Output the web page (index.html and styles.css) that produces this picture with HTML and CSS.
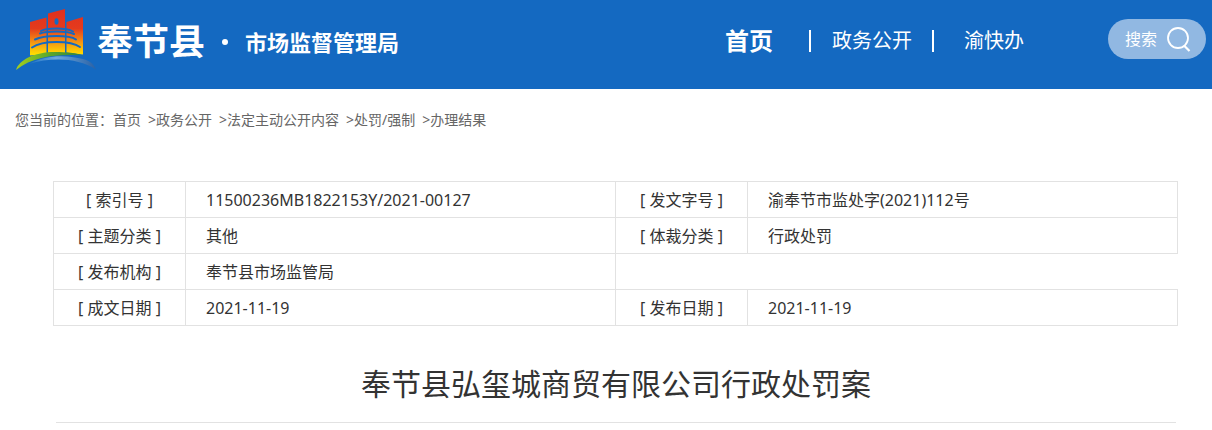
FILE: index.html
```html
<!DOCTYPE html>
<html lang="zh-CN">
<head>
<meta charset="utf-8">
<title>奉节县弘玺城商贸有限公司行政处罚案</title>
<link rel="stylesheet" href="styles.css">
</head>
<body>
<header class="header">
  <a class="brand" href="#">
    <svg class="brand-logo" viewBox="15 8 82 64" width="82" height="64" aria-hidden="true">
      <defs>
        <linearGradient id="tower" gradientUnits="userSpaceOnUse" x1="0" y1="10" x2="0" y2="54">
          <stop offset="0" stop-color="#e0301e"/>
          <stop offset=".42" stop-color="#e43b1d"/>
          <stop offset=".75" stop-color="#f59a12"/>
          <stop offset="1" stop-color="#ffdc00"/>
        </linearGradient>
        <linearGradient id="hill" x1="0" y1="0" x2="1" y2="0">
          <stop offset="0" stop-color="#a5cf1c"/>
          <stop offset=".5" stop-color="#5aa82c"/>
          <stop offset="1" stop-color="#2f8040"/>
        </linearGradient>
        <linearGradient id="river" x1="0" y1="0" x2="1" y2="0">
          <stop offset="0" stop-color="#1a70c4"/>
          <stop offset=".4" stop-color="#6ca8de"/>
          <stop offset="1" stop-color="#2a61a5"/>
        </linearGradient>
      </defs>
      <g fill="url(#tower)">
        <path d="M30 22 46.500 17.500V54L30 55.500Z"/>
        <path d="M48 13.500 65 9V53L48 53.500Z"/>
        <path d="M66.500 22 83 17V54.500L66.500 52.500Z"/>
      </g>
      <ellipse cx="56.500" cy="21.500" rx="2" ry="3.200" fill="#1469c1"/>
      <g fill="none" stroke="#1469c1" stroke-width="2" stroke-linecap="round">
        <path d="M41 31Q45 28.500 56.500 28.500T73 31.500"/>
        <path d="M40 33.500Q45 31.500 56.500 31.500T74 34"/>
        <path d="M35 39.500Q42 36 56.500 36T76 39.500"/>
        <path d="M32 47.500Q40 42 56.500 42T80 47"/>
      </g>
      <path d="M16 70C19 60 34 52 55 52C67 52 76 53 83 55.500C66 54 35 54 16 70Z" fill="url(#hill)"/>
      <path d="M29 64C44 56 60 55 75 57.500C87 59 93 62 96 69.500C78 58 52 57 29 64Z" fill="url(#river)"/>
    </svg>
    <span class="brand-county">奉节县</span>
    <span class="brand-dot"></span>
    <span class="brand-bureau">市场监督管理局</span>
  </a>
  <nav class="nav">
    <a class="nav-link nav-home" href="#">首页</a>
    <a class="nav-link nav-open" href="#">政务公开</a>
    <a class="nav-link nav-service" href="#">渝快办</a>
  </nav>
  <form class="search">
    <input class="search-input" type="text" placeholder="搜索" aria-label="搜索">
    <button class="search-button" type="button" aria-label="提交搜索">
      <svg viewBox="0 0 24 26" width="24" height="26" fill="none" stroke="#fff" aria-hidden="true">
        <circle cx="11" cy="12" r="10" stroke-width="1.800"/>
        <path d="M17 19.500 22.500 25" stroke-width="2.200"/>
      </svg>
    </button>
  </form>
</header>
<nav class="crumbs" aria-label="位置">
  <span>您当前的位置：</span>
  <a href="#">首页</a>
  <span class="crumb-sep">&gt;</span>
  <a href="#">政务公开</a>
  <span class="crumb-sep">&gt;</span>
  <a href="#">法定主动公开内容</a>
  <span class="crumb-sep">&gt;</span>
  <a href="#">处罚/强制</a>
  <span class="crumb-sep">&gt;</span>
  <a href="#">办理结果</a>
</nav>
<main class="content">
  <table class="info">
    <colgroup><col class="col-label"><col><col class="col-label"><col></colgroup>
    <tr><th scope="row">[ 索引号 ]</th><td>11500236MB1822153Y/2021-00127</td><th scope="row">[ 发文字号 ]</th><td>渝奉节市监处字(2021)112号</td></tr>
    <tr><th scope="row">[ 主题分类 ]</th><td>其他</td><th scope="row">[ 体裁分类 ]</th><td>行政处罚</td></tr>
    <tr><th scope="row">[ 发布机构 ]</th><td>奉节县市场监管局</td></tr>
    <tr><th scope="row">[ 成文日期 ]</th><td>2021-11-19</td><th scope="row">[ 发布日期 ]</th><td>2021-11-19</td></tr>
  </table>
  <h1 class="title">奉节县弘玺城商贸有限公司行政处罚案</h1>
</main>
</body>
</html>
```
FILE: styles.css
```css
* {
  box-sizing: border-box;
}

body {
  margin: 0;
  background: #fff;
  color: #333;
  font-family: "Noto Sans", "Noto Sans CJK SC", sans-serif;
  font-size: 16px;
}

a {
  color: inherit;
  text-decoration: none;
}

.header {
  display: flex;
  align-items: center;
  padding: 5px 6px 10px 15px;
  min-height: 89px;
  background: #1469c1;
  color: #fff;
}

.brand {
  display: flex;
  align-items: center;
  font-weight: 700;
  white-space: nowrap;
}

.brand-logo {
  flex: none;
  margin-bottom: 4px;
}

.brand-county {
  font-size: 36px;
  line-height: 60px;
}

.brand-dot {
  width: 6px;
  height: 6px;
  margin: 0 17px;
  border-radius: 50%;
  background: #fff;
}

.brand-bureau {
  font-size: 22px;
  line-height: 60px;
}

.nav {
  display: flex;
  align-items: center;
  margin: 0 0 2px auto;
  white-space: nowrap;
}

.nav-link {
  display: flex;
  align-items: center;
  font-size: 20px;
  line-height: 40px;
}

.nav-home {
  font-size: 24px;
  font-weight: 700;
}

.nav-home::after,
.nav-open::after {
  content: "";
  width: 2px;
  height: 22px;
  background: #fff;
}

.nav-home::after {
  margin: 0 21px 0 36px;
}

.nav-open::after {
  margin: 0 30px 0 20px;
}

.search {
  display: flex;
  align-items: center;
  width: 98px;
  height: 40px;
  margin: 0 0 6px 84px;
  padding: 0 15px 0 17px;
  border-radius: 20px;
  background: #91b8e2;
}

.search-input {
  flex: 1;
  min-width: 0;
  padding: 0;
  border: 0;
  outline: 0;
  background: transparent;
  color: #fff;
  font: inherit;
}

.search-input::placeholder {
  color: #fff;
  opacity: 1;
}

.search-button {
  display: flex;
  padding: 0;
  border: 0;
  background: transparent;
  cursor: pointer;
}

.crumbs {
  display: flex;
  padding: 20px 15px 0;
  color: #666;
  font-size: 14px;
  line-height: 22px;
  white-space: nowrap;
}

.crumb-sep {
  padding-left: 7px;
}

.content {
  padding: 50px 34px 0 53px;
}

.info {
  width: 100%;
  border-collapse: collapse;
  table-layout: fixed;
  line-height: 24px;
}

.col-label {
  width: 132px;
}

.info th,
.info td {
  height: 36px;
  padding: 0;
  border: 1px solid #e2e2e2;
  font-weight: 400;
}

.info td {
  padding-left: 20px;
}

.title {
  margin: 34px 2px 0 3px;
  padding-bottom: 14px;
  border-bottom: 1px solid #e2e2e2;
  font-size: 30px;
  font-weight: 400;
  line-height: 48px;
  text-align: center;
}
```
